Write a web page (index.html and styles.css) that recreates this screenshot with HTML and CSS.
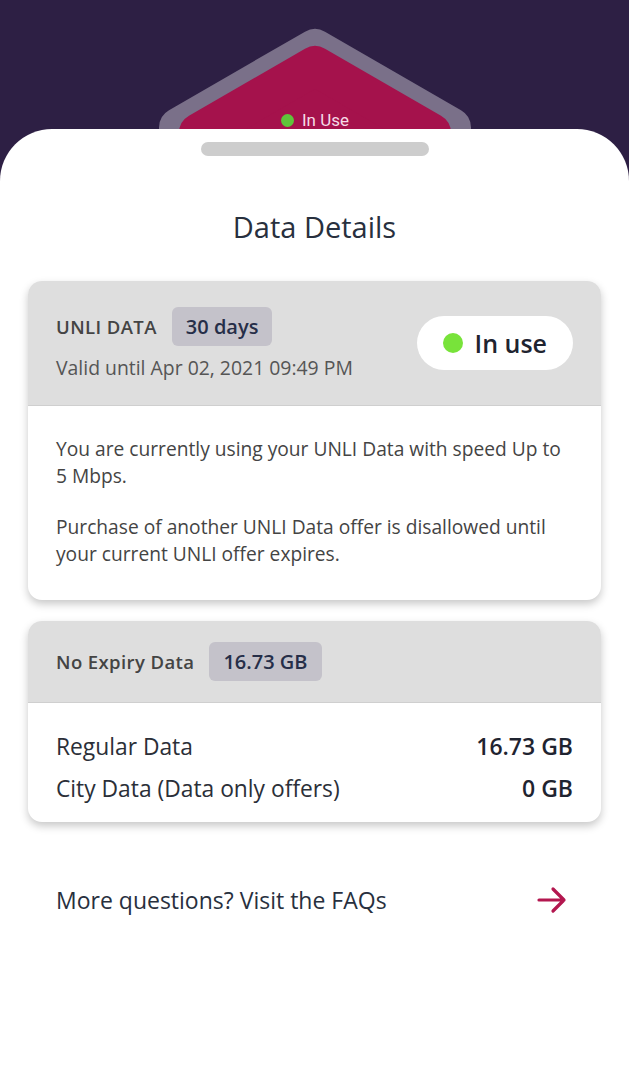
FILE: index.html
```html
<!DOCTYPE html>
<html lang="en">
<head>
<meta charset="utf-8">
<title>Data Details</title>
<link rel="stylesheet" href="styles.css">
</head>
<body>
<div class="backdrop">
  <svg class="hex" width="629" height="160" viewBox="0 0 629 160" xmlns="http://www.w3.org/2000/svg">
    <polygon points="315,49 451,127.5 451,300 179,300 179,127.5" fill="#7a7089" stroke="#7a7089" stroke-width="40" stroke-linejoin="round"/>
    <polygon points="315,66 431,133 431,300 199,300 199,133" fill="#a5124c" stroke="#a5124c" stroke-width="40" stroke-linejoin="round"/>
  </svg>
  <div class="hex-label"><span class="hex-dot"></span>In Use</div>
</div>
<main class="sheet">
  <div class="handle"></div>
  <h1 class="title">Data Details</h1>

  <section class="card">
    <div class="card-head head-unli">
      <div class="head-left">
        <div class="head-row">
          <span class="label">UNLI DATA</span>
          <span class="badge">30 days</span>
        </div>
        <div class="valid">Valid until Apr 02, 2021 09:49 PM</div>
      </div>
      <div class="pill"><span class="dot"></span>In use</div>
    </div>
    <div class="card-body text-body">
      <p>You are currently using your UNLI Data with speed Up to 5 Mbps.</p>
      <p>Purchase of another UNLI Data offer is disallowed until your current UNLI offer expires.</p>
    </div>
  </section>

  <section class="card">
    <div class="card-head head-noexp">
      <span class="label">No Expiry Data</span>
      <span class="badge">16.73 GB</span>
    </div>
    <div class="card-body rows">
      <div class="row"><span>Regular Data</span><span class="val">16.73 GB</span></div>
      <div class="row"><span>City Data (Data only offers)</span><span class="val">0 GB</span></div>
    </div>
  </section>

  <div class="faq">
    <span>More questions? Visit the FAQs</span>
    <svg class="arrow" width="30" height="28" viewBox="0 0 30 28" xmlns="http://www.w3.org/2000/svg">
      <path d="M2 14 H27 M16 3 L27 14 L16 25" fill="none" stroke="#b3174f" stroke-width="3.2" stroke-linecap="round" stroke-linejoin="round"/>
    </svg>
  </div>
</main>
</body>
</html>
```

FILE: styles.css
```css
html, body {
  margin: 0;
  padding: 0;
}
body {
  background: #2d1f44;
  font-family: "Open Sans", "Liberation Sans", sans-serif;
  width: 629px;
  height: 1080px;
  overflow: hidden;
  position: relative;
}
.backdrop {
  position: absolute;
  left: 0;
  top: 0;
  width: 629px;
  height: 160px;
}
.hex {
  position: absolute;
  left: 0;
  top: 0;
}
.hex-label {
  position: absolute;
  left: 281px;
  top: 110px;
  display: flex;
  align-items: center;
  gap: 8px;
  color: #f5dbe6;
  font-size: 17px;
  font-family: "Roboto", sans-serif;
}
.hex-dot {
  width: 13px;
  height: 13px;
  border-radius: 50%;
  background: #5fc43a;
}
.sheet {
  position: relative;
  margin-top: 129px;
  background: #ffffff;
  border-radius: 52px 52px 0 0;
  min-height: 951px;
  padding: 0 28px;
  box-sizing: border-box;
  display: flex;
  flex-direction: column;
}
.handle {
  width: 228px;
  height: 14px;
  border-radius: 7px;
  background: #cdcdcd;
  margin: 13px auto 0;
}
.title {
  margin: 52px 0 0;
  text-align: center;
  font-weight: 400;
  font-size: 29px;
  line-height: 38px;
  color: #28303e;
}
.card {
  margin-top: 35px;
  border-radius: 14px;
  background: #fff;
  box-shadow: 0 4px 9px rgba(0, 0, 0, 0.22);
  overflow: hidden;
}
.card + .card {
  margin-top: 21px;
}
.card-head {
  background: #dedede;
  border-bottom: 1px solid #cfcfcf;
  padding: 0 28px;
}
.head-unli {
  height: 124px;
  display: flex;
  align-items: center;
  justify-content: space-between;
}
.head-left {
  display: flex;
  flex-direction: column;
  gap: 9px;
  margin-top: 2px;
}
.head-row {
  display: flex;
  align-items: center;
  gap: 15px;
}
.label {
  font-size: 18.5px;
  font-weight: 600;
  letter-spacing: 0.4px;
  color: #444444;
}
.badge {
  display: inline-flex;
  align-items: center;
  height: 39px;
  padding: 0 14px;
  border-radius: 6px;
  background: #c4c2ca;
  color: #262e48;
  font-size: 20px;
  font-weight: 600;
}
.valid {
  font-size: 19.4px;
  line-height: 26px;
  color: #555555;
}
.pill {
  display: flex;
  align-items: center;
  gap: 12px;
  height: 54px;
  padding: 0 26px 0 26px;
  border-radius: 27px;
  background: #ffffff;
  font-size: 25px;
  font-weight: 600;
  color: #1f2430;
}
.dot {
  width: 20px;
  height: 20px;
  border-radius: 50%;
  background: #78e33a;
}
.text-body {
  padding: 29px 28px 33px;
}
.text-body p {
  margin: 0;
  font-size: 19.2px;
  line-height: 27px;
  color: #444444;
}
.text-body p + p {
  margin-top: 24px;
}
.head-noexp {
  height: 81px;
  display: flex;
  align-items: center;
  gap: 15px;
}
.rows {
  padding: 22px 28px 13px;
}
.row {
  display: flex;
  justify-content: space-between;
  align-items: center;
  height: 42px;
  font-size: 22.8px;
  color: #2b2f38;
}
.val {
  font-weight: 600;
  font-size: 23px;
  color: #1f2430;
}
.faq {
  margin-top: 57px;
  display: flex;
  align-items: center;
  justify-content: space-between;
  padding: 0 34px 0 28px;
  height: 42px;
  font-size: 23px;
  color: #28303e;
}
```
